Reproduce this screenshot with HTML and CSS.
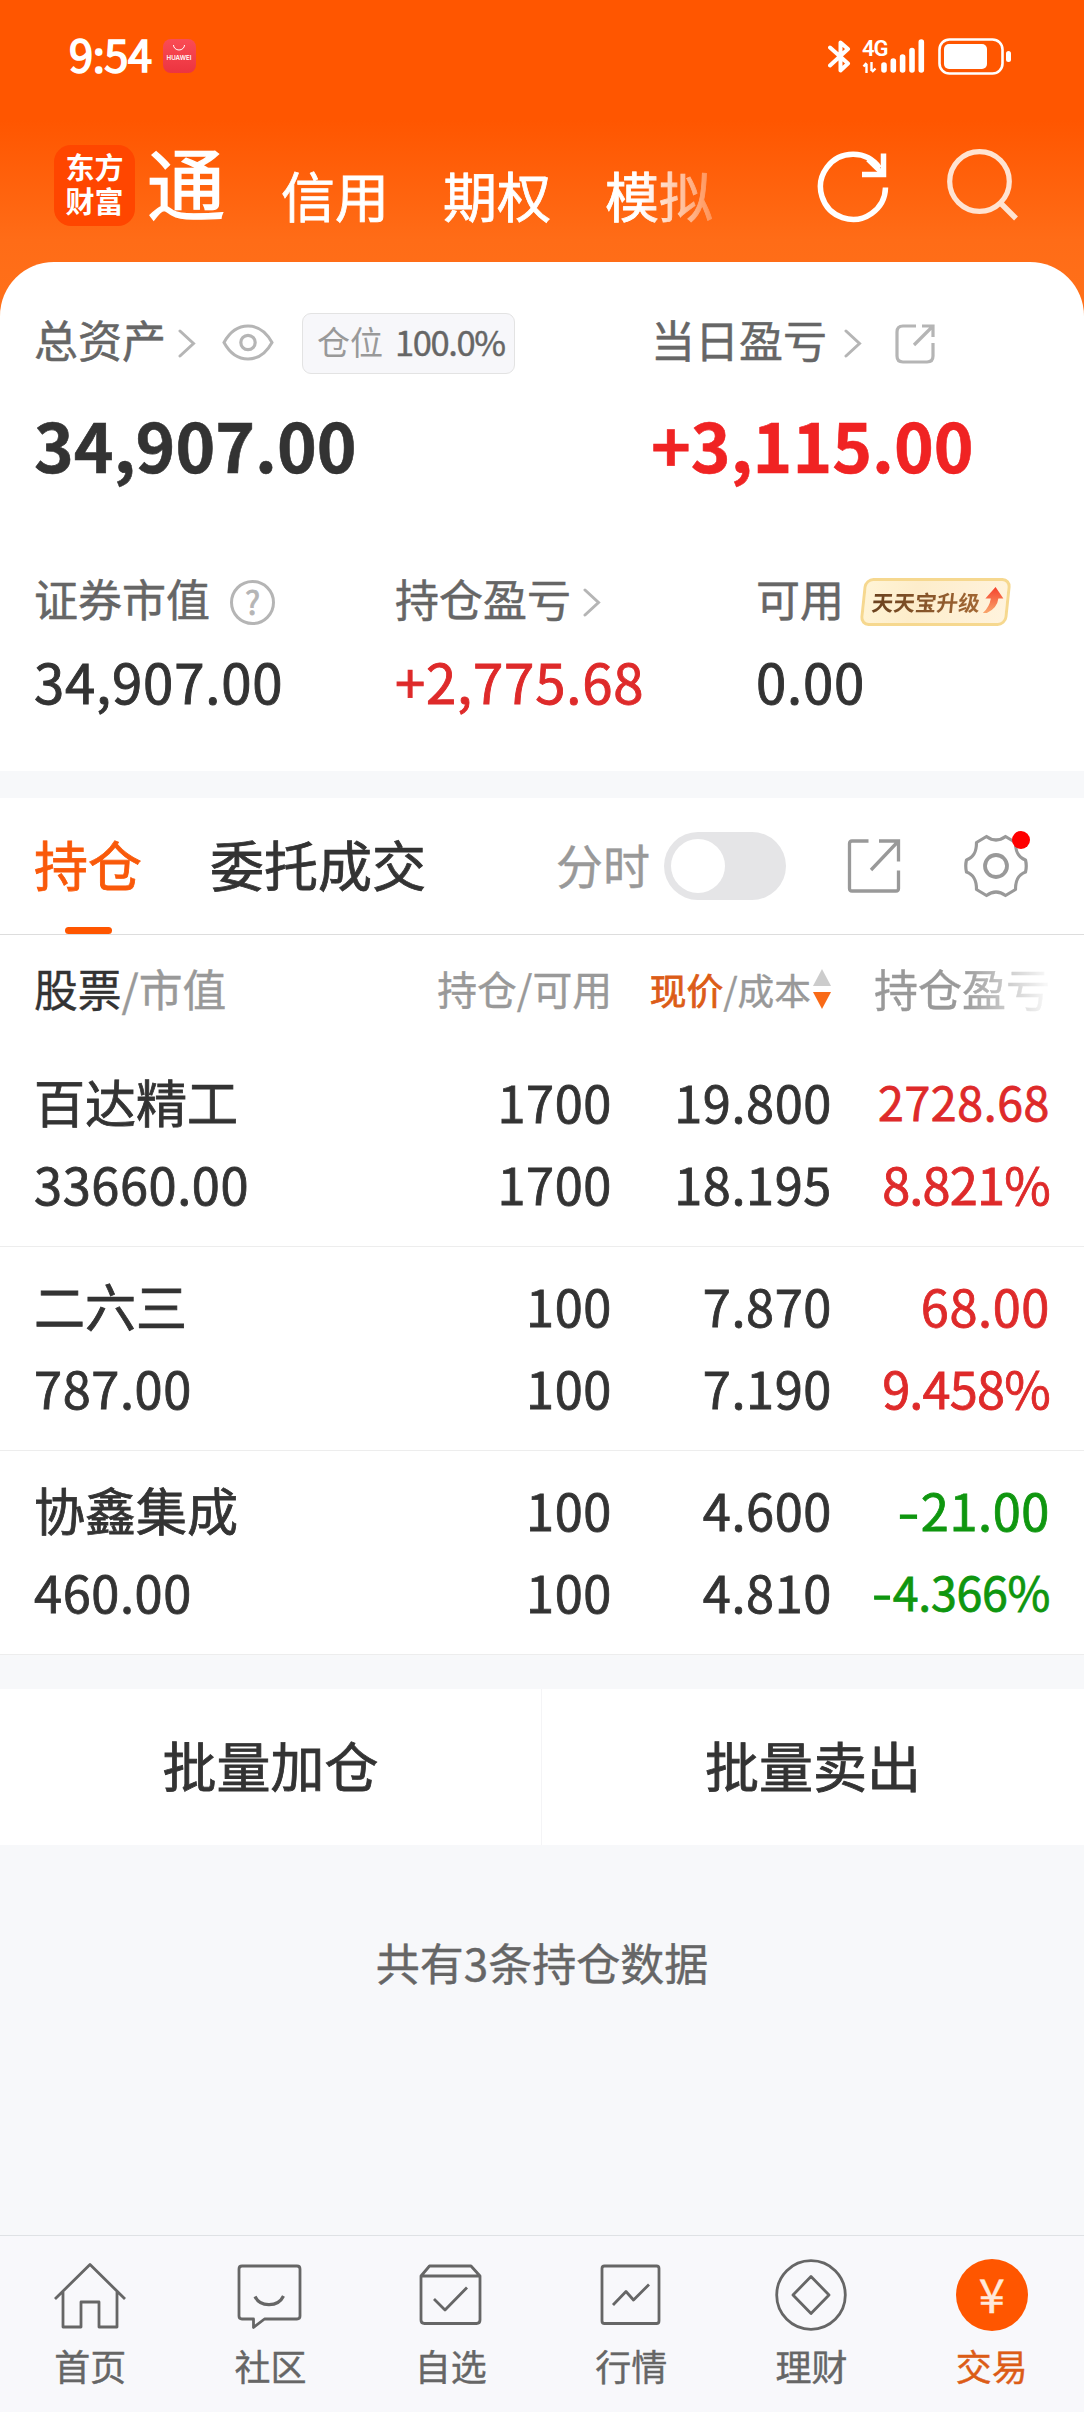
FILE: index.html
```html
<!DOCTYPE html>
<html lang="zh-CN">
<head>
<meta charset="utf-8">
<title>交易 - 持仓</title>
<link rel="stylesheet" href="styles.css">
</head>
<body>
<div class="page">
  <header class="top">
    <div class="status">
      <span class="clock">9:54</span>
      <span class="store"><svg width="14" height="8" viewBox="0 0 14 8"><path d="M1.5 1a5.5 5 0 0 0 11 0" fill="none" stroke="#fff" stroke-width="1"/></svg><span>HUAWEI</span></span>
      <span class="status-right">
        <svg class="bt" width="23" height="35" viewBox="0 0 23 35"><path d="M2 8.500 20 24.500 12.500 31.500V3.500L20 10 2 26.500" fill="none" stroke="#fff" stroke-width="4" stroke-linejoin="round" stroke-linecap="round"/></svg>
        <span class="net"><span>4G</span><svg width="15" height="11" viewBox="0 0 15 11"><path d="M4.500 11V2M4.500 1 1.500 4.500M9.500 0v9M10 10l3.500-3.500" fill="none" stroke="#fff" stroke-width="2.400"/></svg></span>
        <svg class="bars" width="44" height="34" viewBox="0 0 44 34"><path d="M3 26v5M12.300 22v9M21.600 18v13M31 11.500V31M40.300 3v28" stroke="#fff" stroke-width="5.600" stroke-linecap="round"/></svg>
        <svg width="74" height="37" viewBox="0 0 74 37"><rect x="1.500" y="1.500" width="63" height="34" rx="10" fill="none" stroke="#fff" stroke-width="2.600"/><rect x="6" y="6" width="43" height="25" rx="5" fill="#fff"/><rect x="68" y="13" width="5" height="11" rx="2.500" fill="#fff"/></svg>
      </span>
    </div>
    <div class="appbar">
      <div class="logo"><span>东方</span><span>财富</span></div>
      <nav class="modes"><span class="mode current">通</span><span class="mode">信用</span><span class="mode">期权</span><span class="mode">模拟</span></nav>
      <svg class="refresh" width="74" height="74" viewBox="0 0 74 74"><path d="M69.500 38.500A32.500 32.500 0 1 1 63.500 19" fill="none" stroke="#fff" stroke-width="5.500"/><path d="M67.500 4.500V25.500H46" fill="none" stroke="#fff" stroke-width="5.500"/><path d="M52 10.500 67 25" stroke="#fff" stroke-width="5"/></svg>
      <svg class="search" width="74" height="74" viewBox="0 0 74 74"><circle cx="34.500" cy="34.500" r="29.800" fill="none" stroke="#ffe3d1" stroke-width="5.200"/><path d="M55.500 56 71 71.500" stroke="#ffe3d1" stroke-width="5.500"/></svg>
    </div>
  </header>

  <section class="assets">
    <div class="pair">
      <div>
        <div class="label-row tall">
          <span class="label">总资产</span>
          <svg class="chev c1" width="18" height="29" viewBox="0 0 18 29"><path d="M2 2 15.500 14.500 2 27" fill="none" stroke="#b5b5b5" stroke-width="3" stroke-linecap="round"/></svg>
          <svg class="eye" width="52" height="37" viewBox="0 0 52 37"><path d="M2 18.500C14-3.500 38-3.500 50 18.500 38 40.500 14 40.500 2 18.500Z" fill="none" stroke="#b5b5b5" stroke-width="3"/><circle cx="26" cy="18.500" r="7.200" fill="none" stroke="#b5b5b5" stroke-width="3.200"/></svg>
          <span class="ratio"><span>仓位</span><b>100.0%</b></span>
        </div>
        <div class="total">34,907.00</div>
      </div>
      <div>
        <div class="label-row tall">
          <span class="label">当日盈亏</span>
          <svg class="chev c2" width="18" height="29" viewBox="0 0 18 29"><path d="M2 2 15.500 14.500 2 27" fill="none" stroke="#b5b5b5" stroke-width="3" stroke-linecap="round"/></svg>
          <svg class="share-sm" width="40" height="40" viewBox="0 0 40 40"><path d="M21 2H8Q2 2 2 8v24q0 6 6 6h24q6 0 6-6V19M27 2h11v11M38 2 19 21" fill="none" stroke="#b5b5b5" stroke-width="3.200"/></svg>
        </div>
        <div class="total up-strong">+3,115.00</div>
      </div>
    </div>
    <div class="triple">
      <div>
        <div class="label-row">
          <span class="label">证券市值</span>
          <span class="help">?</span>
        </div>
        <div class="amount">34,907.00</div>
      </div>
      <div>
        <div class="label-row">
          <span class="label">持仓盈亏</span>
          <svg class="chev c3" width="18" height="29" viewBox="0 0 18 29"><path d="M2 2 15.500 14.500 2 27" fill="none" stroke="#b5b5b5" stroke-width="3" stroke-linecap="round"/></svg>
        </div>
        <div class="amount up">+2,775.68</div>
      </div>
      <div>
        <div class="label-row">
          <span class="label">可用</span>
          <span class="promo"><span>天天宝升级</span><svg width="20" height="26" viewBox="0 0 20 26"><defs><linearGradient id="rise" x1="0" y1="0" x2="0" y2="1"><stop offset="0" stop-color="#f5402c"/><stop offset="1" stop-color="#f9a66c"/></linearGradient></defs><path d="M10 0 19 11.500H14Q14 21 4 26H0Q6 20 6.500 11.500H1Z" fill="url(#rise)"/></svg></span>
        </div>
        <div class="amount">0.00</div>
      </div>
    </div>
  </section>

  <section class="holdings">
    <div class="tabs">
      <span class="tab active">持仓</span>
      <span class="tab">委托成交</span>
      <span class="minute">分时</span>
      <span class="toggle"></span>
      <svg class="share" width="54" height="54" viewBox="0 0 54 54"><path d="M21.500 2H5Q2.500 2 2.500 4.500v45Q2.500 52 5 52h44q2.500 0 2.500-2.500V31.500M32 2h19.500v20.500M51.500 2 24 31" fill="none" stroke="#999" stroke-width="3.300"/></svg>
      <span class="gear"><svg width="64" height="64" viewBox="0 0 64 64"><path d="M22.500 2.500Q32 9.500 41.500 2.500L51.500 8.500C51.500 17 53.500 23 61.500 26Q63 32 61.500 38C53.500 41 51.500 47 51.500 55.500L41.500 61.500Q32 54.500 22.500 61.500L12.500 55.500C12.500 47 10.500 41 2.500 38Q1 32 2.500 26C10.500 23 12.500 17 12.500 8.500Z" fill="none" stroke="#999" stroke-width="3.200" stroke-linejoin="round"/><circle cx="32" cy="32" r="11" fill="none" stroke="#999" stroke-width="3.800"/></svg><i class="dot"></i></span>
    </div>
    <div class="grid head">
      <span class="h-name"><b>股票</b>/市值</span>
      <span class="h-qty">持仓/可用</span>
      <span class="h-price"><b>现价</b>/成本<svg width="20" height="40" viewBox="0 0 20 40"><path d="M10 0 19 17H1Z" fill="#ccc"/><path d="M10 40 1 23H19Z" fill="#f96a17"/></svg></span>
      <span class="h-pl">持仓盈亏</span>
    </div>
    <div class="grid row">
      <div><p class="name">百达精工</p><p>33660.00</p></div>
      <div><p>1700</p><p>1700</p></div>
      <div><p>19.800</p><p>18.195</p></div>
      <div class="up"><p class="fit">2728.68</p><p class="pct">8.821%</p></div>
    </div>
    <div class="grid row">
      <div><p class="name">二六三</p><p>787.00</p></div>
      <div><p>100</p><p>100</p></div>
      <div><p>7.870</p><p>7.190</p></div>
      <div class="up"><p>68.00</p><p class="pct">9.458%</p></div>
    </div>
    <div class="grid row">
      <div><p class="name">协鑫集成</p><p>460.00</p></div>
      <div><p>100</p><p>100</p></div>
      <div><p>4.600</p><p>4.810</p></div>
      <div class="down"><p><i class="sign">-</i>21.00</p><p class="fit pct4"><i class="sign">-</i>4.366%</p></div>
    </div>
  </section>

  <div class="actions"><span>批量加仓</span><span>批量卖出</span></div>
  <div class="summary">共有3条持仓数据</div>

  <nav class="bottom">
    <a class="item"><svg width="74" height="74" viewBox="0 0 74 74"><path d="M2 41 37 6.500 72 41M10 34V69H28V44H46V69H64V34"/></svg><span>首页</span></a>
    <a class="item"><svg width="74" height="74" viewBox="0 0 74 74"><path d="M9 8H64Q67 8 67 11V58Q67 61 64 61H31.500L20.500 69.500V61H9Q6 61 6 58V11Q6 8 9 8Z"/><path d="M22 38.500C27 49.500 45 49.500 50.500 38" stroke-width="3.200"/></svg><span>社区</span></a>
    <a class="item"><svg width="74" height="74" viewBox="0 0 74 74"><path d="M7 18 15.500 8H57L66 18V62Q66 65.500 62.500 65.500H10.500Q7 65.500 7 62ZM7 18H66M20 41 31 52 53 29.500"/></svg><span>自选</span></a>
    <a class="item"><svg width="74" height="74" viewBox="0 0 74 74"><rect x="8" y="8" width="57" height="57.500" rx="2.500"/><path d="M19 47 32 33.500 39.500 42 55 26.500"/></svg><span>行情</span></a>
    <a class="item"><svg width="74" height="74" viewBox="0 0 74 74"><circle cx="37" cy="37" r="34.300"/><path d="M37 18.500 55 37 37 55.500 19 37Z"/></svg><span>理财</span></a>
    <a class="item on"><i class="coin">¥</i><span>交易</span></a>
  </nav>
</div>
</body>
</html>
```

FILE: styles.css
```css
* { box-sizing: border-box; margin: 0; padding: 0; }
body {
  font-family: "Noto Sans CJK SC", "Noto Sans", sans-serif;
  color: #333;
  background: #f7f8fa;
}
b, i { font-weight: inherit; font-style: normal; }
svg { display: block; flex: none; }
.page { width: 1084px; height: 2412px; display: flex; flex-direction: column; overflow: hidden; }
.up { color: #de2a2a; }
.down { color: #0f960f; }

/* status bar and app bar */
.top {
  height: 322px;
  background: linear-gradient(#ff5600 0, #ff5600 120px, #ff6c17 240px, #ff711a 322px);
  color: #fff;
  flex: none;
}
.status { height: 112px; padding: 0 72px 0 69px; display: flex; align-items: center; }
.clock { font-size: 43.500px; line-height: 60px; letter-spacing: -.5px; -webkit-text-stroke: 1.600px #fff; padding-bottom: 4px; }
.store {
  width: 33px; height: 34px; margin-left: 11px; border-radius: 8px;
  background: linear-gradient(#fa4c55, #ec3440);
  display: flex; flex-direction: column; align-items: center; padding-top: 5px;
}
.store span { font-family: "Inter", sans-serif; font-size: 6.2px; line-height: 12px; font-weight: 600; }
.status-right { margin-left: auto; display: flex; align-items: center; }
.bt { margin-right: 11px; }
.net { width: 26px; height: 33px; font-family: Roboto, sans-serif; font-size: 22px; font-weight: 600; line-height: 17px; letter-spacing: -1px; }
.net svg { margin-top: 5px; }
.bars { margin: 0 13px 0 -7px; }
.appbar { height: 150px; padding-left: 54px; display: flex; align-items: flex-start; }
.logo {
  width: 81px; height: 81px; margin-top: 33px; border-radius: 17px; background: #ff4600;
  font-size: 29px; line-height: 34px; font-weight: 700;
  display: flex; flex-direction: column; align-items: center; padding-top: 4px;
}
.modes {
  display: flex; width: 590px; margin-left: 12px; height: 140px; font-size: 54px; line-height: 80px;
  white-space: nowrap; flex: none;
  -webkit-mask-image: linear-gradient(90deg, #000 495px, transparent 595px);
  mask-image: linear-gradient(90deg, #000 495px, transparent 595px);
}
.mode { padding-top: 43px; margin-right: 54px; -webkit-text-stroke: .8px #fff; }
.current { font-size: 78px; padding-top: 29px; margin-right: 56px; -webkit-text-stroke: 1.300px #fff; }
.refresh { margin: 37px 0 0 79px; }
.search { margin: 35px 0 0 55px; }

/* asset overview */
.assets {
  height: 509px; margin-top: -60px; padding: 51px 0 0 34px; background: #fff;
  border-radius: 54px 54px 0 0; flex: none;
}
.pair { display: grid; grid-template-columns: 617px 1fr; }
.triple { display: grid; grid-template-columns: 361px 361px 1fr; margin-top: 93px; }
.label-row { display: flex; align-items: center; height: 50px; }
.tall { height: 61px; }
.label { font-size: 44px; line-height: 50px; color: #666; padding-bottom: 9px; -webkit-text-stroke: .5px #666; }
.c1 { margin: 0 26px 0 12px; }
.c2 { margin: 0 33px 0 17px; }
.c3 { margin-left: 12px; }
.eye { margin-top: -3px; }
.ratio {
  display: flex; align-items: center; height: 61px; width: 213px; margin-left: 28px; padding: 0 0 5px 14px;
  border: 1px solid #e3e3e3; border-radius: 9px; background: #f7f7fa; font-size: 33px; color: #999;
}
.ratio b { color: #666; font-size: 34.500px; letter-spacing: -1.400px; margin-left: 12px; -webkit-text-stroke: .4px #666; }
.total { font-size: 67.500px; line-height: 80px; font-weight: 700; margin-top: 30px; letter-spacing: 0; -webkit-text-stroke: .6px currentColor; }
.up-strong { color: #f02323; }
.help {
  width: 45px; height: 45px; border: 3px solid #b5b5b5; border-radius: 50%; margin-left: 20px;
  color: #b5b5b5; font-size: 32px; line-height: 37px; text-align: center; -webkit-text-stroke: .8px #b5b5b5;
}
.promo {
  width: 147px; height: 48px; margin-left: 18px; border: 3px solid #f6d88f; border-radius: 9px;
  background: linear-gradient(100deg, #fff4d6, #fdedcb 35%, #fff3dd); transform: skewX(-6deg);
  display: flex; align-items: center; gap: 4px; padding-left: 7px; white-space: nowrap;
}
.promo span {
  font-size: 21.600px; line-height: 30px; font-weight: 700; padding-bottom: 1px;
  background: linear-gradient(90deg, #6b421f, #a36834); -webkit-background-clip: text; background-clip: text; color: transparent;
}
.promo svg { margin-top: -4px; }
.amount { font-size: 54.500px; line-height: 60px; margin-top: 24px; letter-spacing: .8px; -webkit-text-stroke: .9px currentColor; }

/* holdings */
.holdings { background: #fff; margin-top: 27px; flex: none; }
.tabs { height: 137px; border-bottom: 1px solid #ddd; padding-left: 34px; display: flex; align-items: center; }
.tab { font-size: 54px; line-height: 136px; height: 136px; margin-top: -4px; position: relative; margin-right: 68px; -webkit-text-stroke: .8px currentColor; }
.active { color: #f9590a; }
.active::after {
  content: ""; position: absolute; left: 31px; bottom: -2px; width: 47px; height: 7px;
  border-radius: 4px; background: #ff5600;
}
.minute { font-size: 47px; color: #999; line-height: 60px; margin: -4px 14px 0 62px; -webkit-text-stroke: .4px #999; }
.toggle { width: 122px; height: 68px; border-radius: 34px; background: #e5e5e7; padding: 7px; flex: none; }
.toggle::before { content: ""; display: block; width: 54px; height: 54px; border-radius: 50%; background: #fff; }
.share { margin-left: 61px; }
.gear { position: relative; margin-left: 63px; }
.dot { position: absolute; left: 48px; top: -3px; width: 18px; height: 18px; border-radius: 50%; background: #f00; }
.grid { display: grid; grid-template-columns: 1fr 200px 220px 218px; padding: 0 34px; text-align: right; }
.grid > :first-child { text-align: left; }
.head { height: 108px; align-items: center; color: #999; line-height: 60px; padding-bottom: 3px; }
.head > span { white-space: nowrap; -webkit-text-stroke: .4px currentColor; }
.h-name { font-size: 43.800px; }
.h-name b { color: #333; }
.h-qty { font-size: 39.800px; }
.h-price { font-size: 36.700px; display: flex; justify-content: flex-end; align-items: center; padding-top: 3px; }
.h-price b { color: #dc5c17; -webkit-text-stroke: .8px #dc5c17; }
.h-price svg { margin-left: 1px; }
.h-pl {
  font-size: 44px;
  -webkit-mask-image: linear-gradient(90deg, #000 60%, rgba(0,0,0,.08) 98%);
  mask-image: linear-gradient(90deg, #000 60%, rgba(0,0,0,.08) 98%);
}
.row { height: 204px; border-bottom: 1px solid #ededed; padding-top: 17px; font-size: 50.500px; line-height: 82px; letter-spacing: .6px; -webkit-text-stroke: .8px currentColor; }
.row p { height: 82px; white-space: nowrap; }
.row .name { letter-spacing: 0; font-size: 51px; }
.row .fit { font-size: 46.500px; }
.row .pct { letter-spacing: -.8px; }
.row .pct4 { letter-spacing: -.3px; }
.sign { display: inline-block; transform: scaleX(1.25); transform-origin: right; margin-right: 1px; }

.actions { height: 156px; margin-top: 34px; background: #fff; display: grid; grid-template-columns: 1fr 1fr; flex: none; }
.actions span { font-size: 54px; line-height: 152px; text-align: center; -webkit-text-stroke: .8px #333; }
.actions span:first-child { border-right: 1px solid #f4f4f6; }
.summary { flex: 1; padding-top: 87px; text-align: center; font-size: 44px; line-height: 60px; color: #666; -webkit-text-stroke: .4px #666; }

/* bottom navigation */
.bottom { height: 177px; border-top: 1px solid #dfe2e5; background: #f8f8fb; display: grid; grid-template-columns: repeat(6, 1fr); padding: 22px 2px 0 0; flex: none; }
.item { display: flex; flex-direction: column; align-items: center; color: #666; font-size: 36px; line-height: 40px; -webkit-text-stroke: .4px currentColor; }
.item svg { fill: none; stroke: #666; stroke-width: 2.800; stroke-linejoin: round; }
.item span { margin-top: 13px; }
.on { color: #dc5c17; }
.coin { width: 72px; height: 72px; margin: 1px 0; border-radius: 50%; background: #ff5600; color: #ffe9db; font-size: 47px; line-height: 67px; text-align: center; }
```
